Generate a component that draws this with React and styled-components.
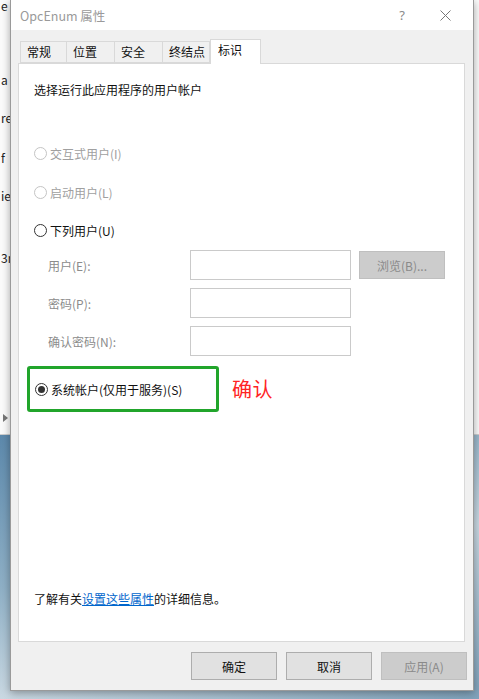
import React from 'react'
import styled, { createGlobalStyle } from 'styled-components'

const Global = createGlobalStyle`
  html, body { margin: 0; padding: 0; }
  body { font-family: "Noto Sans CJK SC", "Noto Sans", sans-serif; }
`

const Screen = styled.div`
  position: relative;
  width: 479px;
  height: 699px;
  overflow: hidden;
  display: flex;
  flex-direction: column;
`

const BackWindow = styled.div`
  height: 434px;
  background: #fbfbfb;
  border-bottom: 1px solid #cfcfcf;
  display: flex;
  flex-direction: column;
  padding-left: 1px;
  font-size: 12px;
  color: #222;
`

const Frag = styled.div`
  margin-top: ${({ gap }) => gap}px;
  line-height: 12px;
  height: 12px;
`

const ScrollArrow = styled.div`
  margin-top: 150px;
  width: 0;
  height: 0;
  border-top: 4px solid transparent;
  border-bottom: 4px solid transparent;
  border-left: 5px solid #777;
  margin-left: 2px;
`

const Desktop = styled.div`
  flex: 1;
  background: linear-gradient(160deg, #5d89ac 0%, #8fb0c6 35%, #c9d8e2 60%, #7fa2bb 100%);
`

const Dialog = styled.div`
  position: absolute;
  left: 10px;
  top: 0;
  width: 462px;
  height: 690px;
  background: #f0f0f0;
  border: 1px solid #9a9a9a;
  border-top: none;
  box-shadow: 0 2px 8px rgba(0, 0, 0, 0.35);
  display: flex;
  flex-direction: column;
`

const TitleBar = styled.div`
  height: 31px;
  background: #fff;
  display: flex;
  align-items: center;
  padding-left: 9px;
  font-size: 12.5px;
  color: #9a9a9a;
`

const Title = styled.div`
  flex: 1;
`

const TitleBtn = styled.div`
  width: ${({ w }) => w}px;
  display: flex;
  align-items: center;
  justify-content: center;
  color: #8a8a8a;
  font-family: "Noto Sans", sans-serif;
  font-size: 13px;
`

const Body = styled.div`
  flex: 1;
  display: flex;
  flex-direction: column;
  padding: 9px 8px 10px 7px;
`

const Tabs = styled.div`
  display: flex;
  align-items: flex-end;
  height: 24px;
  padding-left: 2px;
`

const Tab = styled.div`
  box-sizing: border-box;
  width: ${({ w }) => w}px;
  height: ${({ active }) => (active ? 25 : 22)}px;
  margin: ${({ active }) => (active ? '0 0 -1px 0' : '0')};
  padding-left: ${({ pad }) => pad}px;
  background: ${({ active }) => (active ? '#fff' : '#f0f0f0')};
  border: 1px solid #d9d9d9;
  border-bottom: ${({ active }) => (active ? 'none' : '1px solid #d9d9d9')};
  border-left: ${({ first, active }) => (first || active ? '1px solid #d9d9d9' : 'none')};
  font-size: 12px;
  line-height: 20px;
  color: #111;
  position: relative;
  z-index: ${({ active }) => (active ? 2 : 1)};
`

const Panel = styled.div`
  box-sizing: border-box;
  height: 579px;
  background: #fff;
  border: 1px solid #d9d9d9;
  display: flex;
  flex-direction: column;
  padding: 0 0 0 15px;
  font-size: 12px;
  color: #111;
`

const Heading = styled.div`
  margin-top: 17px;
  line-height: 18px;
`

const RadioRow = styled.div`
  display: flex;
  align-items: center;
  height: 18px;
  margin-top: ${({ gap }) => gap}px;
  color: ${({ disabled }) => (disabled ? '#a0a0a0' : '#111')};
`

const Radio = styled.span`
  box-sizing: border-box;
  width: 13px;
  height: 13px;
  border-radius: 50%;
  border: 1px solid ${({ disabled }) => (disabled ? '#c4c4c4' : '#333')};
  margin-right: 3px;
  display: flex;
  align-items: center;
  justify-content: center;
  &::after {
    content: '';
    display: ${({ checked }) => (checked ? 'block' : 'none')};
    width: 7px;
    height: 7px;
    border-radius: 50%;
    background: #333;
  }
`

const Form = styled.div`
  display: grid;
  grid-template-columns: 134px 161px 86px;
  grid-auto-rows: 30px;
  row-gap: 8px;
  column-gap: 8px;
  margin-top: 11px;
  padding-left: 14px;
  align-items: center;
`

const Label = styled.div`
  color: #8c8c8c;
`

const Field = styled.div`
  box-sizing: border-box;
  height: 30px;
  border: 1px solid #cacaca;
  background: #fff;
`

const Browse = styled.div`
  box-sizing: border-box;
  height: 28px;
  background: #cccccc;
  border: 1px solid #bfbfbf;
  color: #8a8a8a;
  display: flex;
  align-items: center;
  justify-content: center;
`

const ChoiceLine = styled.div`
  display: flex;
  align-items: center;
  margin-top: 10px;
  margin-left: -7px;
`

const Highlight = styled.div`
  box-sizing: border-box;
  width: 192px;
  height: 46px;
  border: 3px solid #21a52b;
  border-radius: 3px;
  display: flex;
  align-items: center;
  padding-left: 5px;
`

const Note = styled.div`
  margin-left: 13px;
  margin-top: -2px;
  color: #ff2424;
  font-size: 20px;
  letter-spacing: 0.5px;
`

const Spacer = styled.div`
  flex: 1;
`

const Info = styled.div`
  margin-bottom: 33px;
  line-height: 18px;
`

const InfoLink = styled.span`
  color: #0066cc;
  text-decoration: underline;
`

const Buttons = styled.div`
  display: flex;
  justify-content: flex-end;
  gap: 9px;
  margin-top: 10px;
  margin-right: -2px;
`

const Button = styled.div`
  box-sizing: border-box;
  width: 86px;
  height: 28px;
  background: ${({ disabled }) => (disabled ? '#cccccc' : '#e1e1e1')};
  border: 1px solid ${({ disabled }) => (disabled ? '#bfbfbf' : '#adadad')};
  color: ${({ disabled }) => (disabled ? '#8a8a8a' : '#111')};
  font-size: 12px;
  display: flex;
  align-items: center;
  justify-content: center;
`

const tabs = [
  { label: '常规', w: 47, pad: 6 },
  { label: '位置', w: 48, pad: 6 },
  { label: '安全', w: 48, pad: 6 },
  { label: '终结点', w: 47, pad: 6 },
  { label: '标识', w: 51, pad: 7, active: true },
]

const CloseIcon = () => (
  <svg width="11" height="11" viewBox="0 0 11 11">
    <path d="M0.5 0.5 L10.5 10.5 M10.5 0.5 L0.5 10.5" stroke="#777" strokeWidth="1" />
  </svg>
)

export default function App() {
  return (
    <Screen>
      <Global />
      <BackWindow>
        <Frag gap={0}>e</Frag>
        <Frag gap={62}>a</Frag>
        <Frag gap={26}>re</Frag>
        <Frag gap={28}>f</Frag>
        <Frag gap={26}>ie</Frag>
        <Frag gap={50}>3r</Frag>
        <ScrollArrow />
      </BackWindow>
      <Desktop />

      <Dialog>
        <TitleBar>
          <Title>OpcEnum 属性</Title>
          <TitleBtn w={30}>?</TitleBtn>
          <TitleBtn w={56}><CloseIcon /></TitleBtn>
        </TitleBar>
        <Body>
          <Tabs>
            {tabs.map((t, i) => (
              <Tab key={t.label} w={t.w} pad={t.pad} active={t.active} first={i === 0}>
                {t.label}
              </Tab>
            ))}
          </Tabs>
          <Panel>
            <Heading>选择运行此应用程序的用户帐户</Heading>

            <RadioRow gap={45} disabled>
              <Radio disabled />交互式用户(I)
            </RadioRow>
            <RadioRow gap={21} disabled>
              <Radio disabled />启动用户(L)
            </RadioRow>
            <RadioRow gap={20}>
              <Radio />下列用户(U)
            </RadioRow>

            <Form>
              <Label>用户(E):</Label>
              <Field />
              <Browse>浏览(B)...</Browse>
              <Label>密码(P):</Label>
              <Field />
              <span />
              <Label>确认密码(N):</Label>
              <Field />
              <span />
            </Form>

            <ChoiceLine>
              <Highlight>
                <Radio checked />系统帐户(仅用于服务)(S)
              </Highlight>
              <Note>确认</Note>
            </ChoiceLine>

            <Spacer />
            <Info>
              了解有关<InfoLink>设置这些属性</InfoLink>的详细信息。
            </Info>
          </Panel>
          <Buttons>
            <Button>确定</Button>
            <Button>取消</Button>
            <Button disabled>应用(A)</Button>
          </Buttons>
        </Body>
      </Dialog>
    </Screen>
  )
}
